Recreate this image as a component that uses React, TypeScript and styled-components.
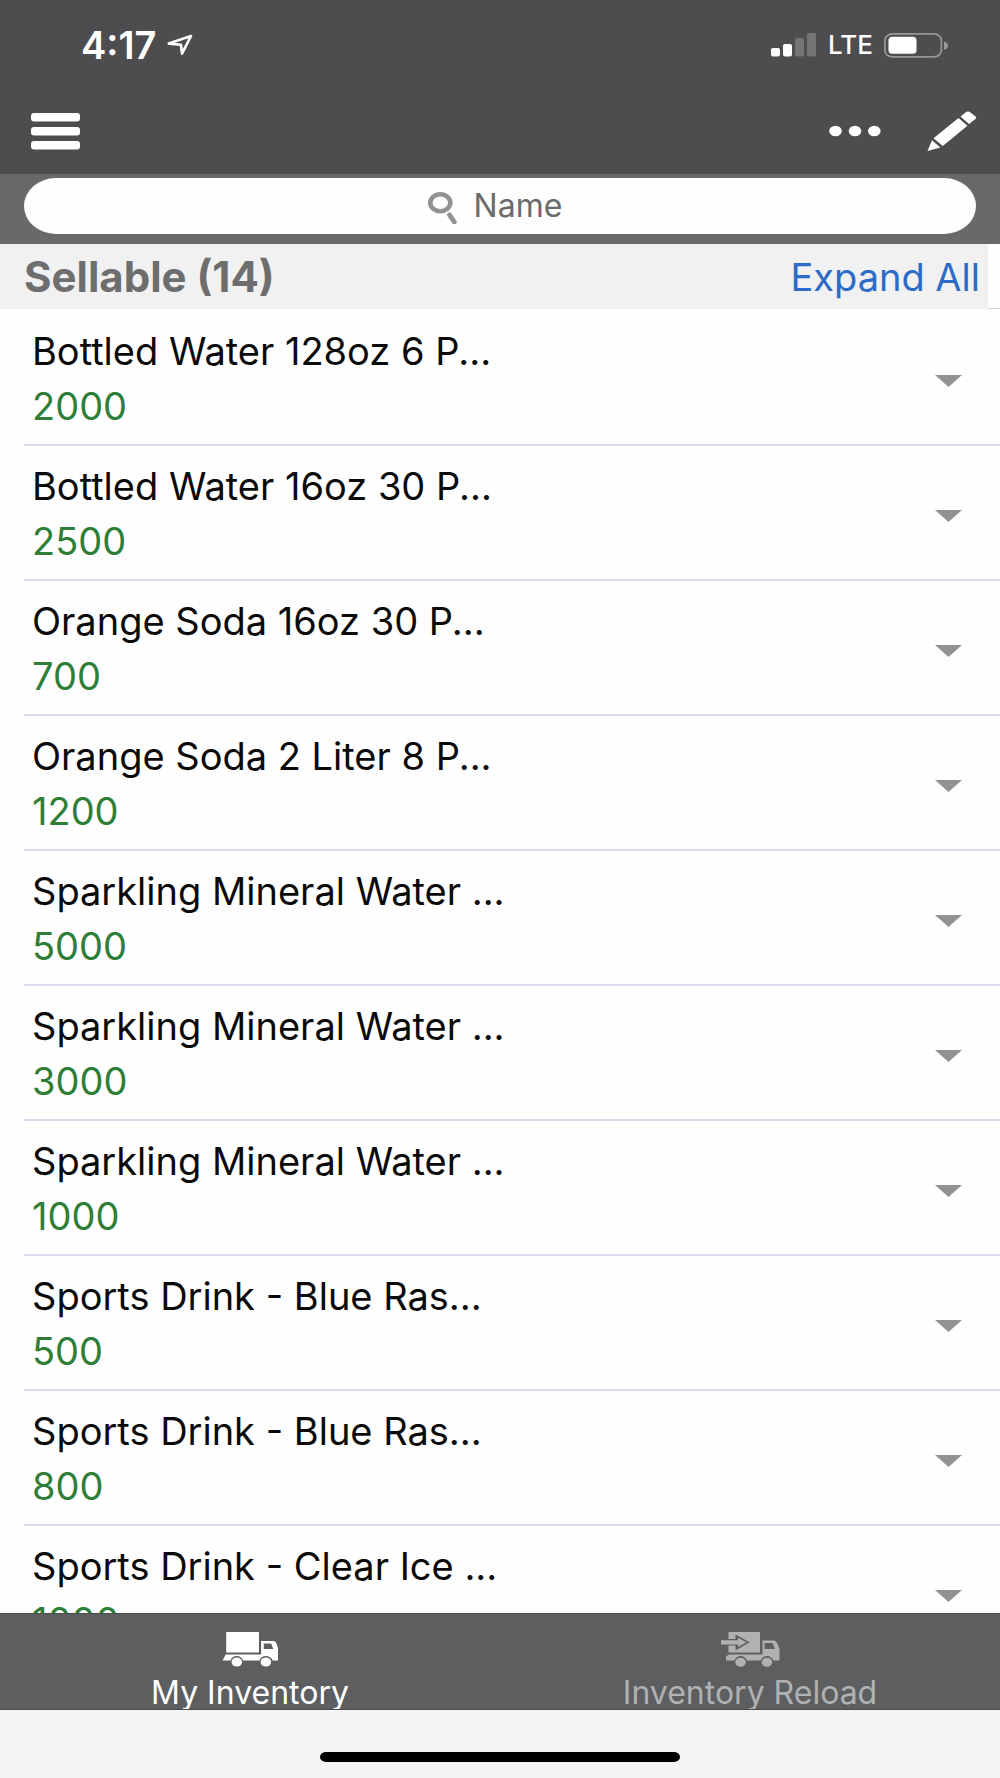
import React, { useState } from "react";
import styled, { createGlobalStyle } from "styled-components";

const GlobalStyle = createGlobalStyle`
  * { box-sizing: border-box; }
  body {
    margin: 0;
    background: #fefefe;
    font-family: Inter, "Liberation Sans", sans-serif;
  }
  button { font: inherit; border: 0; padding: 0; margin: 0; background: none; cursor: pointer; }
`;

const Screen = styled.div`
  display: flex;
  flex-direction: column;
  height: 100vh;
  overflow: hidden;
`;

const TopBar = styled.header`
  flex: none;
  padding: 24px 23px 23px 31px;
  background: #4d4d4f;
  color: #fff;
`;

const StatusRow = styled.div`
  display: flex;
  align-items: center;
  justify-content: space-between;
  height: 42px;
  padding: 0 29px 0 50px;
`;

const StatusGroup = styled.div`
  display: flex;
  align-items: center;
  gap: 11px;
`;

const Clock = styled.span`
  font-size: 38px;
  font-weight: 600;
  line-height: 42px;
`;

const Carrier = styled.span`
  font-size: 26px;
  font-weight: 500;
  line-height: 42px;
`;

const ToolRow = styled.div`
  display: flex;
  align-items: center;
  justify-content: space-between;
  padding-top: 45px;
`;

const ToolGroup = styled.div`
  display: flex;
  align-items: center;
  gap: 46px;
`;

const IconButton = styled.button`
  display: flex;
  align-items: center;
  height: 40px;
  color: #fff;
`;

const SearchBand = styled.div`
  flex: none;
  padding: 4px 24px 10px;
  background: #69696b;
`;

const SearchPill = styled.label`
  display: flex;
  align-items: center;
  justify-content: center;
  gap: 16px;
  height: 56px;
  padding-right: 10px;
  border-radius: 32px / 28px;
  background: #fefefe;
`;

const SearchInput = styled.input`
  field-sizing: content;
  min-width: 60px;
  padding: 0;
  border: 0;
  outline: 0;
  background: none;
  font: 400 32px/40px Inter, "Liberation Sans", sans-serif;
  color: #6b6b6b;
  &::placeholder { color: #6b6b6b; opacity: 1; }
`;

const SectionHeader = styled.div`
  flex: none;
  display: grid;
  grid-template-columns: 1fr 12px;
  height: 65px;
`;

const SectionBar = styled.div`
  display: flex;
  align-items: center;
  justify-content: space-between;
  padding: 0 8px 0 24px;
  background: #f1f1f1;
`;

const SectionEdge = styled.div`
  border-bottom: 1px solid #ccd6cc;
`;

const SectionTitle = styled.h1`
  margin: 0;
  font-size: 42px;
  font-weight: 700;
  line-height: 48px;
  color: #6e6e6e;
`;

const ExpandAll = styled.button`
  font-size: 38px;
  line-height: 48px;
  color: #2b6cc9;
`;

const List = styled.ul`
  flex: 1;
  min-height: 0;
  overflow: hidden;
  margin: 0;
  padding: 2px 0 0 24px;
  list-style: none;
`;

const Item = styled.li`
  display: flex;
  align-items: center;
  justify-content: space-between;
  height: 135px;
  padding: 0 38px 0 8px;
  border-bottom: 2px solid #d6dcec;
`;

const ItemText = styled.div`
  padding-top: 2px;
  font-size: 38px;
  line-height: 55px;
`;

const ItemName = styled.div`
  color: #0a0a0a;
`;

const Quantity = styled.div`
  color: #2f7e38;
`;

const Toggle = styled.button<{ $open: boolean }>`
  display: flex;
  padding-top: 6px;
  transform: ${(p) => (p.$open ? "rotate(180deg)" : "none")};
`;

const TabBar = styled.nav`
  flex: none;
  display: grid;
  grid-template-columns: 1fr 1fr;
  height: 97px;
  overflow: hidden;
  background: #5d5e60;
  border-top: 1px solid #4b4c4e;
  border-bottom: 1px solid #4b4c4e;
`;

const Tab = styled.button<{ $active: boolean }>`
  display: flex;
  flex-direction: column;
  align-items: center;
  padding-top: 18px;
  gap: 6px;
  font-size: 32px;
  line-height: 40px;
  color: ${(p) => (p.$active ? "#fff" : "#b0b1b2")};
`;

const HomeArea = styled.footer`
  flex: none;
  display: flex;
  justify-content: center;
  height: 68px;
  padding-top: 42px;
  background: #f4f4f4;
`;

const HomeIndicator = styled.div`
  width: 36%;
  height: 10px;
  border-radius: 6px / 5px;
  background: #000;
`;

const items = [
  { name: "Bottled Water 128oz 6 P...", quantity: 2000 },
  { name: "Bottled Water 16oz 30 P...", quantity: 2500 },
  { name: "Orange Soda 16oz 30 P...", quantity: 700 },
  { name: "Orange Soda 2 Liter 8 P...", quantity: 1200 },
  { name: "Sparkling Mineral Water ...", quantity: 5000 },
  { name: "Sparkling Mineral Water ...", quantity: 3000 },
  { name: "Sparkling Mineral Water ...", quantity: 1000 },
  { name: "Sports Drink - Blue Ras...", quantity: 500 },
  { name: "Sports Drink - Blue Ras...", quantity: 800 },
  { name: "Sports Drink - Clear Ice ...", quantity: 1000 },
];

const LocationIcon = () => (
  <svg width="26" height="22" viewBox="0 0 26 22" fill="none" stroke="#fff" strokeWidth="2.6" strokeLinejoin="round" aria-hidden="true">
    <path d="M24 2 L1.8 9.6 L14 10.8 L15 19.6 Z" />
  </svg>
);

const SignalIcon = () => (
  <svg width="46" height="24" viewBox="0 0 46 24" fill="#fff" aria-hidden="true">
    <rect x="0" y="15" width="9" height="8.5" rx="2" />
    <rect x="12" y="11" width="9" height="12.5" rx="2" />
    <rect x="24" y="5" width="9" height="18.5" rx="2" opacity=".22" />
    <rect x="36" y="0" width="9" height="23.5" rx="2" opacity=".22" />
  </svg>
);

const BatteryIcon = () => (
  <svg width="64" height="25" viewBox="0 0 64 25" aria-hidden="true">
    <rect x=".9" y=".9" width="56.5" height="23" rx="7.5" ry="6.5" fill="none" stroke="#98989a" strokeWidth="1.7" />
    <rect x="4.5" y="3.8" width="28" height="17" rx="4" ry="3.5" fill="#fff" />
    <path d="M60 8.5 Q64 10 64 12.5 Q64 15.500 60 17 Z" fill="#98989a" />
  </svg>
);

const MenuIcon = () => (
  <svg width="49" height="37" viewBox="0 0 49 37" fill="currentColor" aria-hidden="true">
    <rect y="0" width="49" height="8.6" rx="3" />
    <rect y="14" width="49" height="8.6" rx="3" />
    <rect y="28" width="49" height="8.6" rx="3" />
  </svg>
);

const MoreIcon = () => (
  <svg width="52" height="12" viewBox="0 0 52 12" fill="currentColor" aria-hidden="true">
    <ellipse cx="6.500" cy="6" rx="6.300" ry="5.300" />
    <ellipse cx="26" cy="6" rx="6.300" ry="5.300" />
    <ellipse cx="45.300" cy="6" rx="6.300" ry="5.300" />
  </svg>
);

const PencilIcon = () => (
  <svg width="50" height="40" viewBox="0 0 50 40" fill="currentColor" aria-hidden="true">
    <path d="M33.500 5.500 L39.500 0.800 Q41 0 42.500 0.800 L48.600 5.500 Q49.700 6.600 48.500 8 L42 13 Z" />
    <path d="M31.500 7 L40.400 14.800 L15.800 35 L6.500 27.300 Z" />
    <path d="M5 29.300 L13.300 36.500 L0.500 40 Z" />
  </svg>
);

const SearchIcon = () => (
  <svg width="30" height="36" viewBox="0 -4 30 36" fill="none" stroke="#929292" aria-hidden="true">
    <ellipse cx="12.300" cy="10.800" rx="10" ry="8.500" strokeWidth="4.600" />
    <path d="M21.500 22.800 L26.300 30" strokeWidth="4.800" strokeLinecap="round" />
  </svg>
);

const ArrowIcon = () => (
  <svg width="27" height="12" viewBox="0 0 27 12" fill="#929292" aria-hidden="true">
    <path d="M0 0 H27 L13.500 12 Z" />
  </svg>
);

const truckCab = "M37 9 H48.500 Q50.500 9 51.300 11 L53 16 V28.500 H48 Q46 24 41.500 24 Q37 24 35.500 28.500 H20 Q18.500 24 14 24 Q9.500 24 8 28.500 H0.500 L3.500 22.500 H37 Z M39.500 11.500 V17 H48.500 L46.500 11.500 Z";

const TruckIcon = () => (
  <svg width="56" height="35" viewBox="0 0 53 35" preserveAspectRatio="none" fill="currentColor" fillRule="evenodd" aria-hidden="true">
    <rect x="4" y="0" width="31" height="20.500" />
    <path d={truckCab} />
    <ellipse cx="14" cy="30" rx="5" ry="4.500" />
    <ellipse cx="41.500" cy="30" rx="5" ry="4.500" />
  </svg>
);

const ReloadTruckIcon = () => (
  <svg width="59" height="35" viewBox="0 0 59 35" fill="currentColor" fillRule="evenodd" aria-hidden="true">
    <path d="M7.500 0 H39 V20.500 H7.500 V13.500 H14.500 V18.500 L28.500 10.300 L14.500 2.500 V7 H7.500 Z" />
    <path d="M0 8.300 H17 V5.800 L25.500 10.300 L17 15 V12.400 H0 Z" />
    <path d="M41.500 8.500 H53 Q55 8.500 56 11 L58.500 16.500 V28.500 H52.500 Q50 24 46 24 Q42 24 39.500 28.500 H26 Q24 24 19.500 24 Q15.500 24 13.500 28.500 H5 V24.500 L8 22.500 H41.500 Z M43.500 11 V17 H54 L51.500 11 Z" />
    <ellipse cx="19.500" cy="30.300" rx="5.200" ry="4.500" />
    <ellipse cx="46" cy="30.300" rx="5.200" ry="4.500" />
  </svg>
);

export default function App() {
  const [tab, setTab] = useState("inventory");
  const [open, setOpen] = useState<boolean[]>(items.map(() => false));

  return (
    <Screen>
      <GlobalStyle />
      <TopBar>
        <StatusRow>
          <StatusGroup>
            <Clock>4:17</Clock>
            <LocationIcon />
          </StatusGroup>
          <StatusGroup>
            <SignalIcon />
            <Carrier>LTE</Carrier>
            <BatteryIcon />
          </StatusGroup>
        </StatusRow>
        <ToolRow>
          <IconButton aria-label="Menu"><MenuIcon /></IconButton>
          <ToolGroup>
            <IconButton aria-label="More"><MoreIcon /></IconButton>
            <IconButton aria-label="Edit"><PencilIcon /></IconButton>
          </ToolGroup>
        </ToolRow>
      </TopBar>
      <SearchBand>
        <SearchPill>
          <SearchIcon />
          <SearchInput type="text" placeholder="Name" aria-label="Name" />
        </SearchPill>
      </SearchBand>
      <SectionHeader>
        <SectionBar>
          <SectionTitle>Sellable (14)</SectionTitle>
          <ExpandAll onClick={() => setOpen(items.map(() => true))}>Expand All</ExpandAll>
        </SectionBar>
        <SectionEdge />
      </SectionHeader>
      <List>
        {items.map((item, i) => (
          <Item key={i}>
            <ItemText>
              <ItemName>{item.name}</ItemName>
              <Quantity>{item.quantity}</Quantity>
            </ItemText>
            <Toggle
              $open={open[i]}
              aria-label={"Toggle " + item.name}
              aria-expanded={open[i]}
              onClick={() => setOpen(open.map((o, j) => (j === i ? !o : o)))}
            >
              <ArrowIcon />
            </Toggle>
          </Item>
        ))}
      </List>
      <TabBar>
        <Tab $active={tab === "inventory"} onClick={() => setTab("inventory")}>
          <TruckIcon />
          My Inventory
        </Tab>
        <Tab $active={tab === "reload"} onClick={() => setTab("reload")}>
          <ReloadTruckIcon />
          Inventory Reload
        </Tab>
      </TabBar>
      <HomeArea>
        <HomeIndicator />
      </HomeArea>
    </Screen>
  );
}
